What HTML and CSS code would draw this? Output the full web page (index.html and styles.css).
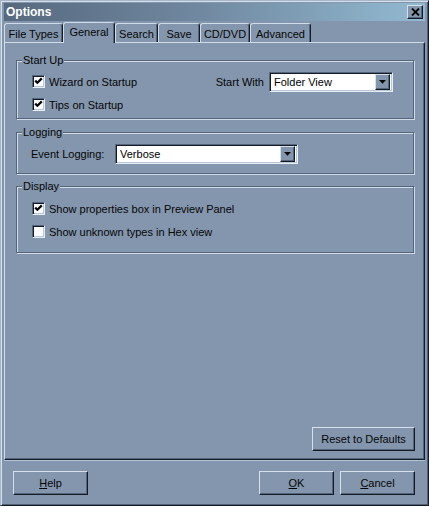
FILE: index.html
```html
<!DOCTYPE html>
<html>
<head>
<meta charset="utf-8">
<title>Options</title>
<link rel="stylesheet" href="styles.css">
</head>
<body>
<div class="window">
  <div class="titlebar">
    <span class="title">Options</span>
    <span class="close">
      <svg width="9" height="8" viewBox="0 0 9 8"><path d="M1 0.5 L8 7.5 M8 0.5 L1 7.5" stroke="#000" stroke-width="1.8" fill="none"/></svg>
    </span>
  </div>
  <div class="tabs">
    <div class="tab t-filetypes">File Types</div>
    <div class="tab t-general selected">General</div>
    <div class="tab t-search">Search</div>
    <div class="tab t-save">Save</div>
    <div class="tab t-cd">CD/DVD</div>
    <div class="tab t-adv">Advanced</div>
  </div>
  <div class="panel">
    <div class="group startup">
      <span class="legend">Start Up</span>
      <div class="col">
        <div class="row"><span class="box"><svg width="9" height="9" viewBox="0 0 9 9"><path d="M1.2 3.6 L3.4 5.8 L7.8 1.4" stroke="#000" stroke-width="2.2" fill="none"/></svg></span>Wizard on Startup</div>
        <div class="row"><span class="box"><svg width="9" height="9" viewBox="0 0 9 9"><path d="M1.2 3.6 L3.4 5.8 L7.8 1.4" stroke="#000" stroke-width="2.2" fill="none"/></svg></span>Tips on Startup</div>
      </div>
      <div class="row">
        <span class="sw-label">Start With</span>
        <div class="combo combo-start">
          <span class="combo-text">Folder View</span>
          <span class="combo-btn"><svg width="7" height="4" viewBox="0 0 7 4"><polygon points="0,0 7,0 3.5,3.8" fill="#000"/></svg></span>
        </div>
      </div>
    </div>

    <div class="group logging">
      <span class="legend">Logging</span>
      <div class="row row-log">
        <span class="log-label">Event Logging:</span>
        <div class="combo combo-log">
          <span class="combo-text">Verbose</span>
          <span class="combo-btn"><svg width="7" height="4" viewBox="0 0 7 4"><polygon points="0,0 7,0 3.5,3.8" fill="#000"/></svg></span>
        </div>
      </div>
    </div>

    <div class="group display">
      <span class="legend">Display</span>
      <div class="row"><span class="box"><svg width="9" height="9" viewBox="0 0 9 9"><path d="M1.2 3.6 L3.4 5.8 L7.8 1.4" stroke="#000" stroke-width="2.2" fill="none"/></svg></span>Show properties box in Preview Panel</div>
      <div class="row"><span class="box"></span>Show unknown types in Hex view</div>
    </div>

    <button class="btn reset">Reset to Defaults</button>
  </div>
  <div class="footer">
    <button class="btn"><u>H</u>elp</button>
    <span class="spacer"></span>
    <button class="btn"><u>O</u>K</button>
    <button class="btn"><u>C</u>ancel</button>
  </div>
</div>
</body>
</html>
```
FILE: styles.css
```css
* { box-sizing: border-box; }

html, body {
  margin: 0;
  background: #8496ad;
  font-family: "Liberation Sans", Arial, sans-serif;
  font-size: 11px;
  color: #050505;
}

.window {
  width: 429px;
  height: 506px;
  display: flex;
  flex-direction: column;
  background: #8496ad;
  border: 1px solid;
  border-color: #a8b7c8 #141b25 #141b25 #a8b7c8;
  box-shadow: inset 1px 1px #d6e0eb, inset -1px -1px #4f5f74;
  padding: 2px 3px 2px 3px;
}

.titlebar {
  height: 18px;
  flex: none;
  display: flex;
  align-items: center;
  justify-content: space-between;
  padding: 0 2px 0 2px;
  background: linear-gradient(to right, #56697f 0%, #6f879f 45%, #92bad1 100%);
}

.title {
  color: #fff;
  font-weight: bold;
  font-size: 12px;
}

.close {
  width: 16px;
  height: 14px;
  display: flex;
  align-items: center;
  justify-content: center;
  background: #8496ad;
  border: 1px solid;
  border-color: #d6e0eb #141b25 #141b25 #d6e0eb;
  box-shadow: inset -1px -1px #55667c;
}

.tabs {
  height: 21px;
  flex: none;
  display: flex;
  align-items: flex-end;
  position: relative;
  z-index: 1;
}

.tab {
  height: 19px;
  display: flex;
  align-items: center;
  justify-content: center;
  border: 1px solid;
  border-bottom: none;
  border-color: #d0dce8 #141b25 transparent #d0dce8;
  border-radius: 3px 3px 0 0;
  box-shadow: inset -1px 0 #55667c;
  background: #8496ad;
  padding-top: 1px;
}

.tab.selected {
  height: 21px;
  margin-bottom: -1px;
  padding-top: 0;
  padding-bottom: 3px;
}

.t-filetypes { width: 59px; }
.t-general { width: 52px; }
.t-search { width: 43px; }
.t-save { width: 42px; }
.t-cd { width: 50px; }
.t-adv { width: 61px; }

.panel {
  flex: 1;
  display: flex;
  flex-direction: column;
  border: 1px solid;
  border-color: #d0dce8 #141b25 #141b25 #d0dce8;
  box-shadow: inset -1px -1px #55667c;
  padding: 17px 10px 8px 11px;
}

.group {
  position: relative;
  border: 1px solid #55667c;
  box-shadow: inset 1px 1px #cfdbe7, 1px 1px #cfdbe7;
}

.legend {
  position: absolute;
  top: -7px;
  left: 5px;
  padding: 0 1px;
  line-height: 13px;
  background: #8496ad;
}

.row {
  height: 23px;
  display: flex;
  align-items: center;
  white-space: nowrap;
}

.box {
  width: 13px;
  height: 13px;
  flex: none;
  margin-right: 4px;
  background: #fff;
  border: 1px solid;
  border-color: #55667c #e8eef5 #e8eef5 #55667c;
  box-shadow: inset 1px 1px #141b25, inset -1px -1px #b8c6d6;
  display: flex;
  align-items: center;
  justify-content: center;
}

.startup {
  height: 59px;
  display: flex;
  justify-content: space-between;
  align-items: flex-start;
  padding: 9px 20px 0 15px;
}

.sw-label { margin-right: 5px; }

.combo {
  height: 20px;
  display: flex;
  align-items: center;
  background: #fff;
  border: 1px solid;
  border-color: #55667c #e8eef5 #e8eef5 #55667c;
  box-shadow: inset 1px 1px #141b25, inset -1px -1px #b8c6d6;
  padding: 2px 2px 2px 2px;
}

.combo-text {
  flex: 1;
  padding-left: 2px;
  color: #000;
}

.combo-btn {
  width: 15px;
  height: 16px;
  flex: none;
  display: flex;
  align-items: center;
  justify-content: center;
  background: #8496ad;
  border: 1px solid;
  border-color: #d6e0eb #141b25 #141b25 #d6e0eb;
  box-shadow: inset -1px -1px #55667c;
}

.combo-start { width: 124px; }
.combo-log { width: 183px; }

.logging {
  margin-top: 13px;
  height: 42px;
  padding: 10px 0 0 14px;
}

.row-log { height: 21px; }

.log-label { width: 84px; }

.display {
  margin-top: 12px;
  height: 67px;
  padding: 10px 0 0 15px;
}

.btn {
  font: inherit;
  color: #050505;
  width: 75px;
  height: 24px;
  padding: 0;
  background: #8496ad;
  border: 1px solid;
  border-color: #d6e0eb #141b25 #141b25 #d6e0eb;
  box-shadow: inset -1px -1px #55667c;
}

.reset {
  width: 103px;
  margin-top: auto;
  align-self: flex-end;
  margin-right: -1px;
}

.footer {
  height: 43px;
  flex: none;
  display: flex;
  align-items: flex-start;
  gap: 6px;
  border-top: 1px solid #b4c3d4;
  padding: 10px 10px 0 9px;
}

.spacer { flex: 1; }
```
